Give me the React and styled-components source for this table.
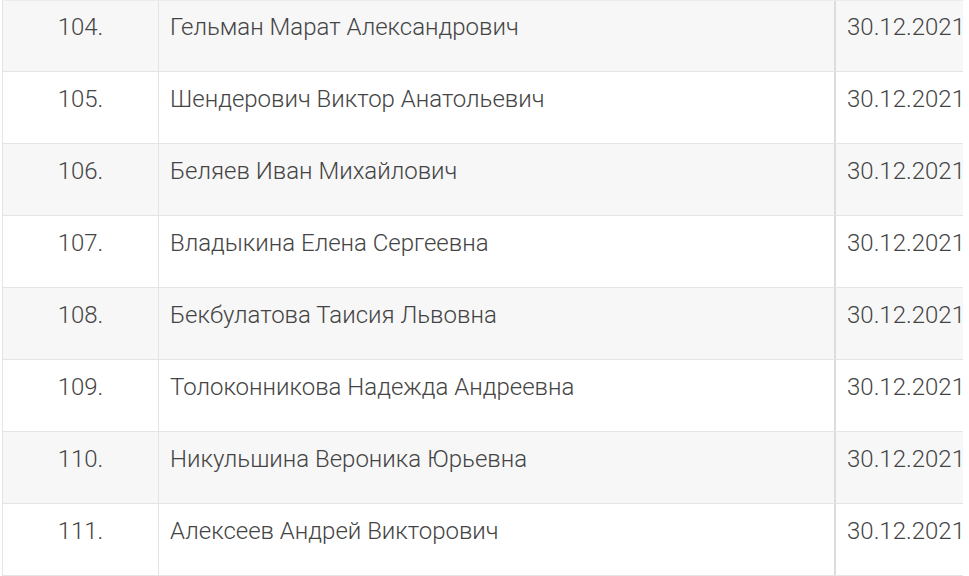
import React from "react";
import styled, { createGlobalStyle } from "styled-components";

const GlobalStyle = createGlobalStyle`
  html, body {
    margin: 0;
    padding: 0;
    background: #ffffff;
  }
  * {
    box-sizing: border-box;
  }
`;

const rows = [
  { num: "104.", name: "Гельман Марат Александрович", date: "30.12.2021" },
  { num: "105.", name: "Шендерович Виктор Анатольевич", date: "30.12.2021" },
  { num: "106.", name: "Беляев Иван Михайлович", date: "30.12.2021" },
  { num: "107.", name: "Владыкина Елена Сергеевна", date: "30.12.2021" },
  { num: "108.", name: "Бекбулатова Таисия Львовна", date: "30.12.2021" },
  { num: "109.", name: "Толоконникова Надежда Андреевна", date: "30.12.2021" },
  { num: "110.", name: "Никульшина Вероника Юрьевна", date: "30.12.2021" },
  { num: "111.", name: "Алексеев Андрей Викторович", date: "30.12.2021" },
];

const Table = styled.div`
  margin-left: 2px;
  width: 961px;
  border-left: 1px solid #e4e4e4;
  border-top: 1px solid #ececec;
  font-family: "Roboto Light", Roboto, "Liberation Sans", sans-serif;
  font-weight: 300;
  font-size: 24px;
  color: #444444;
`;

const Row = styled.div`
  display: grid;
  grid-template-columns: 156px 675px 1fr;
  height: ${({ $first }) => ($first ? "71px" : "72px")};
  border-bottom: 1px solid #e4e4e4;
  background: ${({ $striped }) => ($striped ? "#f7f7f7" : "#ffffff")};
`;

const Cell = styled.div`
  padding: ${({ $first }) => ($first ? "11px" : "12px")} 10px 0 11px;
  line-height: 30px;
  white-space: nowrap;
`;

const NumCell = styled(Cell)`
  padding-left: 10px;
  text-align: center;
  border-right: 1px solid #e4e4e4;
`;

const DateCell = styled(Cell)`
  padding-right: 0;
  border-left: 2px solid #dcdcdc;
`;

export default function App() {
  return (
    <>
      <GlobalStyle />
      <Table>
        {rows.map((r, i) => (
          <Row key={r.num} $striped={i % 2 === 0} $first={i === 0}>
            <NumCell $first={i === 0}>{r.num}</NumCell>
            <Cell $first={i === 0}>{r.name}</Cell>
            <DateCell $first={i === 0}>{r.date}</DateCell>
          </Row>
        ))}
      </Table>
    </>
  );
}
